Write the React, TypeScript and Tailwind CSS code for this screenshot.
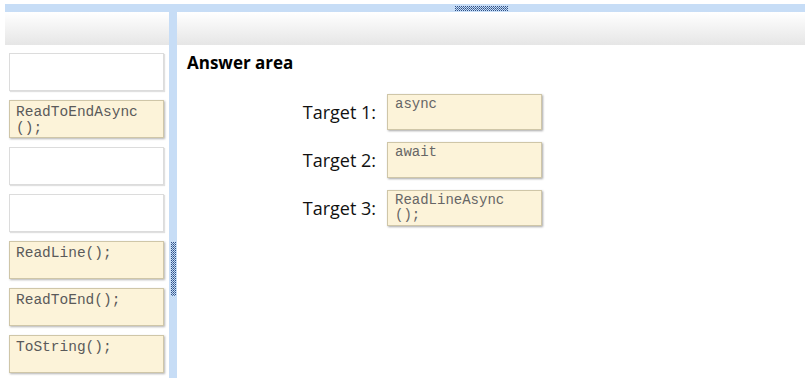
import React from "react";

const mono = { fontFamily: '"Liberation Mono", "Courier New", monospace' };

function Grip({ w, h }: { w: number; h: number }) {
  return (
    <svg width={w} height={h} className="block">
      <defs>
        <pattern id={`g${w}${h}`} width="2" height="2" patternUnits="userSpaceOnUse">
          <rect width="1" height="1" fill="#2d4f86" />
          <rect x="1" y="1" width="1" height="1" fill="#5577aa" />
        </pattern>
      </defs>
      <rect width={w} height={h} fill={`url(#g${w}${h})`} />
    </svg>
  );
}

function Tile({ text }: { text?: string }) {
  if (!text) {
    return (
      <div className="h-[38px] w-[155px] border border-[#dcdcdc] bg-white shadow-[1px_1px_1px_rgba(0,0,0,0.12)]" />
    );
  }
  return (
    <div
      className="h-[38px] w-[155px] border border-[#cfc6a8] bg-[#fcf3d9] px-[6px] pt-[3px] text-[14.5px] leading-[16px] text-[#5a5a5a] shadow-[1px_1px_2px_rgba(0,0,0,0.3)]"
      style={mono}
    >
      {text.split("\n").map((l) => (
        <div key={l}>{l}</div>
      ))}
    </div>
  );
}

export default function App() {
  const tiles = ["", "ReadToEndAsync\n();", "", "", "ReadLine();", "ReadToEnd();", "ToString();"];
  const targets = [
    { label: "Target 1:", value: "async" },
    { label: "Target 2:", value: "await" },
    { label: "Target 3:", value: "ReadLineAsync\n();" },
  ];
  return (
    <div className="flex h-[378px] w-[810px] flex-col bg-white pl-[5px] pr-[5px] pt-[4px]">
      <div className="flex h-[8px] shrink-0 items-center bg-[#c7ddf6] pl-[450px]">
        <Grip w={53} h={5} />
      </div>
      <div className="flex min-h-0 flex-1">
        <div className="flex w-[164px] flex-col">
          <div className="h-[33px] bg-gradient-to-b from-white to-[#e6e6e6]" />
          <div className="flex flex-col gap-[9px] pl-[4px] pt-[8px]">
            {tiles.map((t, i) => (
              <Tile key={i} text={t} />
            ))}
          </div>
        </div>
        <div className="flex w-[8px] flex-col items-center bg-[#c7ddf6] pt-[230px]">
          <Grip w={5} h={54} />
        </div>
        <div className="flex flex-1 flex-col">
          <div className="h-[33px] bg-gradient-to-b from-white to-[#e6e6e6]" />
          <div
            className="pl-[10px] pt-[7px] text-[17px] font-bold leading-[22px] text-black"
            style={{ fontFamily: '"Open Sans", "Liberation Sans", sans-serif' }}
          >
            Answer area
          </div>
          <div className="flex flex-col gap-[12px] pl-[124px] pt-[20px]">
            {targets.map((t) => (
              <div key={t.label} className="flex items-center gap-[11px]">
                <div
                  className="w-[75px] text-right text-[18px] text-[#111]"
                  style={{ fontFamily: '"Open Sans", "Liberation Sans", sans-serif' }}
                >
                  {t.label}
                </div>
                <div
                  className="h-[36px] w-[155px] border border-[#cfc6a8] bg-[#fcf3d9] px-[7px] pt-[2px] text-[14px] leading-[15px] text-[#666] shadow-[1px_1px_2px_rgba(0,0,0,0.35)]"
                  style={mono}
                >
                  {t.value.split("\n").map((l) => (
                    <div key={l}>{l}</div>
                  ))}
                </div>
              </div>
            ))}
          </div>
        </div>
      </div>
    </div>
  );
}
